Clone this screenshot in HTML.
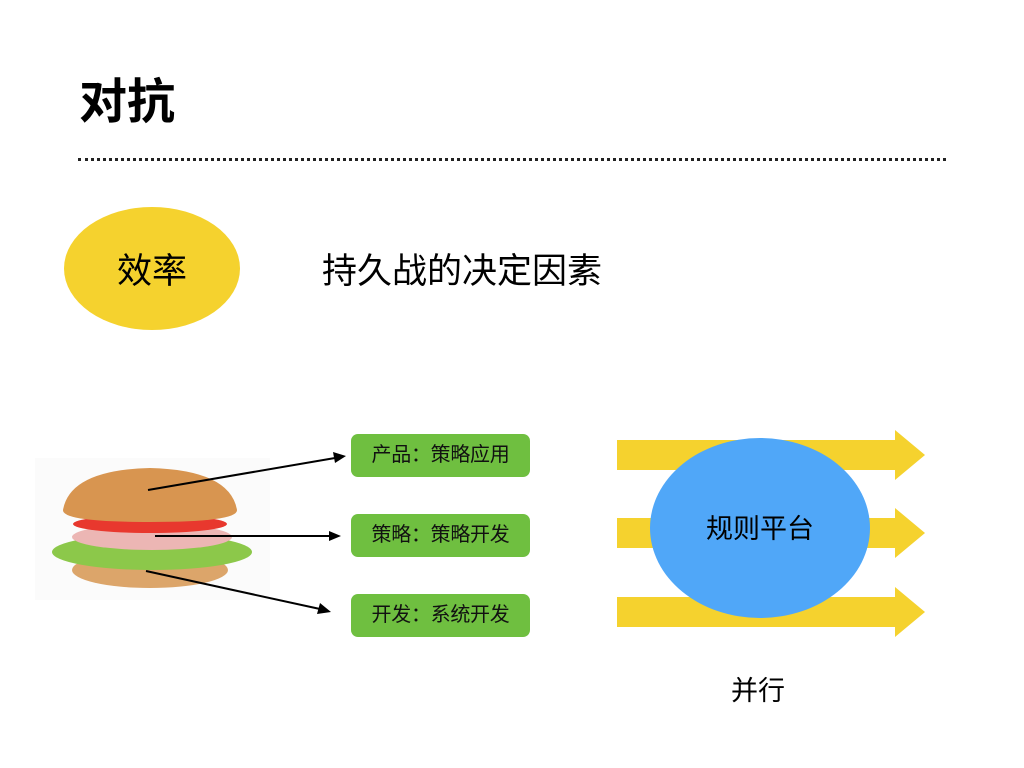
<!DOCTYPE html>
<html><head><meta charset="utf-8"><style>
body{margin:0;width:1024px;height:768px;background:#fff;position:relative;overflow:hidden;font-family:"Liberation Sans","Noto Sans CJK SC",sans-serif;}
.a{position:absolute;}
.box{position:absolute;left:351px;width:179px;height:43px;background:#6fbf40;border-radius:7px;font-size:20px;line-height:43px;text-align:center;color:#111;letter-spacing:-0.3px;}
</style></head><body>
<div class="a" style="left:79px;top:72px;font-size:48px;font-weight:bold;color:#000;line-height:62px;">对抗</div>
<div class="a" style="left:78px;top:158px;width:868px;border-top:3px dotted #222;"></div>
<div class="a" style="left:64px;top:207px;width:176px;height:123px;border-radius:50%;background:#f5d22e;"></div>
<div class="a" style="left:64px;top:250px;width:176px;text-align:center;font-size:35px;line-height:44px;">效率</div>
<div class="a" style="left:322px;top:250px;font-size:35px;line-height:44px;">持久战的决定因素</div>
<svg class="a" style="left:0;top:0" width="1024" height="768">
<rect x="35" y="458" width="235" height="142" fill="#fbfbfb"/>
<ellipse cx="150" cy="570" rx="78" ry="18" fill="#dca56a"/>
<ellipse cx="152" cy="552" rx="100" ry="18" fill="#8cc84a"/>
<ellipse cx="152" cy="537" rx="80" ry="13" fill="#ecb6b4"/>
<ellipse cx="150" cy="524" rx="77" ry="9" fill="#e8382e"/>
<path d="M63 510 Q70 470 150 468 Q230 470 237 510 Q238 522 150 522 Q62 522 63 510Z" fill="#d89550"/>
<line x1="148" y1="490" x2="335" y2="458" stroke="#000" stroke-width="2"/>
<polygon points="346,456 333,452 335,463" fill="#000"/>
<line x1="155" y1="536" x2="330" y2="536" stroke="#000" stroke-width="2"/>
<polygon points="341,536 329,531 329,541" fill="#000"/>
<line x1="146" y1="571" x2="320" y2="609" stroke="#000" stroke-width="2"/>
<polygon points="331,612 320,603 317,614" fill="#000"/>
<g fill="#f5d22e">
<rect x="617" y="440" width="280" height="30"/><polygon points="895,430 925,455 895,480"/>
<rect x="617" y="518" width="280" height="30"/><polygon points="895,508 925,533 895,558"/>
<rect x="617" y="597" width="280" height="30"/><polygon points="895,587 925,612 895,637"/>
</g>
<ellipse cx="760" cy="528" rx="110" ry="90" fill="#50a7f8"/>
</svg>
<div class="box" style="top:434px">产品：策略应用</div>
<div class="box" style="top:514px">策略：策略开发</div>
<div class="box" style="top:594px">开发：系统开发</div>
<div class="a" style="left:650px;top:512px;width:220px;text-align:center;font-size:27px;line-height:34px;">规则平台</div>
<div class="a" style="left:731px;top:674px;font-size:27px;line-height:34px;">并行</div>
</body></html>
